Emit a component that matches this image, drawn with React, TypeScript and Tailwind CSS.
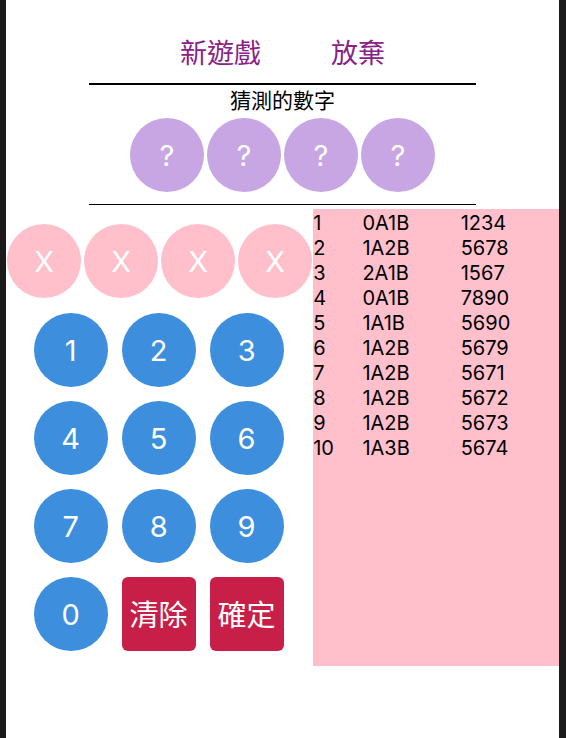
type Guess = { result: string; digits: string };

const guesses: Guess[] = [
  { result: '0A1B', digits: '1234' },
  { result: '1A2B', digits: '5678' },
  { result: '2A1B', digits: '1567' },
  { result: '0A1B', digits: '7890' },
  { result: '1A1B', digits: '5690' },
  { result: '1A2B', digits: '5679' },
  { result: '1A2B', digits: '5671' },
  { result: '1A2B', digits: '5672' },
  { result: '1A2B', digits: '5673' },
  { result: '1A3B', digits: '5674' },
];

const round = 'flex size-[74px] shrink-0 items-center justify-center rounded-full pt-0.5 text-[29px] text-white';

function Slots({ value, color }: { value: string; color: string }) {
  return (
    <div className="flex justify-center gap-[3px]">
      {[0, 1, 2, 3].map((i) => (
        <div key={i} className={`${round} ${color}`}>{value}</div>
      ))}
    </div>
  );
}

function Keypad() {
  return (
    <div className="mt-[15px] grid grid-cols-[repeat(3,74px)] justify-center gap-3.5 pr-0.5">
      {['1', '2', '3', '4', '5', '6', '7', '8', '9', '0'].map((n) => (
        <button key={n} type="button" className={`${round} bg-[#3d8fdd]`}>{n}</button>
      ))}
      {['清除', '確定'].map((label) => (
        <button key={label} type="button" className="size-[74px] rounded-md bg-[#c81f48] pt-1 text-[29px] text-white">
          {label}
        </button>
      ))}
    </div>
  );
}

export default function App() {
  return (
    <main className="min-h-screen border-l-6 border-r-7 border-[#1b1b1b] bg-white font-['Inter','Noto_Sans_CJK_TC',sans-serif] text-black">
      <header className="mx-auto w-[70%]">
        <nav className="flex h-[83px] items-end justify-center gap-[70px] pb-[11px] text-[27px] leading-9 text-[#882288]">
          <button type="button">新遊戲</button>
          <button type="button">放棄</button>
        </nav>
        <section className="border-t-2 border-b border-black pt-0.5 pb-3">
          <h1 className="pb-1 text-center text-[21px] leading-[27px]">猜測的數字</h1>
          <Slots value="?" color="bg-[#c7a6e3]" />
        </section>
      </header>
      <div className="mt-1 grid grid-cols-[5fr_4fr]">
        <section className="pt-[15px]">
          <Slots value="X" color="bg-[#ffc0cb]" />
          <Keypad />
        </section>
        <section className="min-h-[457px] bg-[#ffc0cb] pt-0.5">
          <table className="w-full table-fixed text-left text-[20px] leading-[25px]">
            <colgroup>
              <col className="w-[20%]" />
              <col className="w-[40%]" />
              <col className="w-[40%]" />
            </colgroup>
            <tbody>
              {guesses.map((g, i) => (
                <tr key={i}>
                  <td className="p-0">{i + 1}</td>
                  <td className="p-0">{g.result}</td>
                  <td className="p-0">{g.digits}</td>
                </tr>
              ))}
            </tbody>
          </table>
        </section>
      </div>
    </main>
  );
}
